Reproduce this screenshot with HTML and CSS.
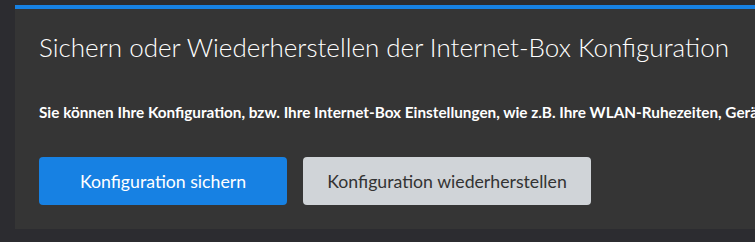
FILE: index.html
```html
<!DOCTYPE html>
<html lang="de">
<head>
  <meta charset="UTF-8" />
  <title>Konfiguration</title>
  <link rel="stylesheet" href="styles.css">
</head>
<body>
  <div class="card">
    <h1>Sichern oder Wiederherstellen der Internet-Box Konfiguration</h1>
    <p>Sie können Ihre Konfiguration, bzw. Ihre Internet-Box Einstellungen, wie z.B. Ihre WLAN-Ruhezeiten, Geräte-Namen und Portweiterleitungen sichern und wiederherstellen.</p>
    <div class="actions">
      <button class="btn btn-primary">Konfiguration sichern</button>
      <button class="btn btn-secondary">Konfiguration wiederherstellen</button>
    </div>
  </div>
</body>
</html>
```

FILE: styles.css
```css
html, body {
  margin: 0;
  height: 100%;
}

body {
  font-family: Lato, "Open Sans", Arial, sans-serif;
  background: #2c2c30;
  color: #fff;
  padding: 5px 0 0 15px;
  overflow: hidden;
  box-sizing: border-box;
}

.card {
  width: 1100px;
  height: 224px;
  box-sizing: border-box;
  background: #353535;
  border-top: 4px solid #1781e3;
  padding: 20px 24px 0 24px;
}

h1 {
  font-size: 26px;
  font-weight: 300;
  margin: 0 0 38px;
  line-height: 36px;
}

p {
  font-size: 15.3px;
  font-weight: 700;
  margin: 0 0 36px;
  white-space: nowrap;
}

.actions {
  display: flex;
  gap: 16px;
}

.btn {
  font-family: inherit;
  font-size: 17.7px;
  height: 48px;
  border: none;
  border-radius: 4px;
  cursor: pointer;
}

.btn-primary {
  width: 248px;
  background: #1781e3;
  color: #fff;
}

.btn-secondary {
  width: 288px;
  background: #d0d4d8;
  color: #333;
}
```
